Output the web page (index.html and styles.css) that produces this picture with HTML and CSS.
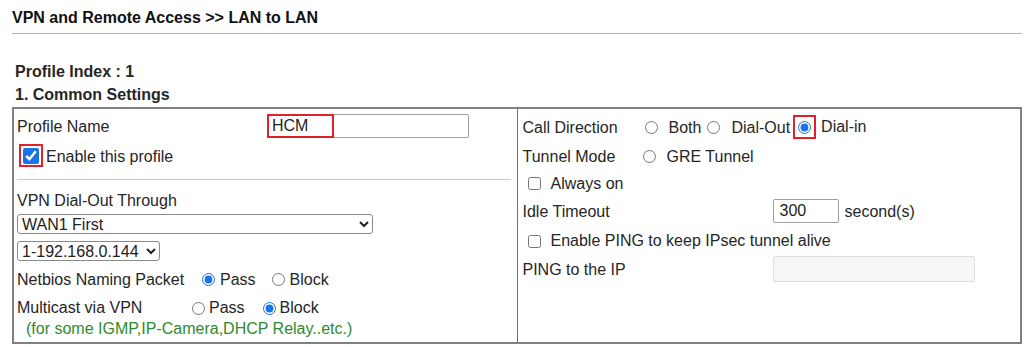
FILE: index.html
```html
<!DOCTYPE html>
<html lang="en">
<head>
    <meta charset="UTF-8">
    <title>VPN and Remote Access &gt;&gt; LAN to LAN</title>
    <link rel="stylesheet" href="styles.css">
</head>
<body>

<div class="page">
    <!-- Titulo de la pagina -->
    <h1 class="page-title">VPN and Remote Access &gt;&gt; LAN to LAN</h1>

    <div class="profile-index">Profile Index : 1</div>
    <div class="section-title">1. Common Settings</div>

    <table class="settings">
        <tr>
            <!-- Columna izquierda -->
            <td class="cell cell-left">
                <div class="row row-name">
                    <span class="label">Profile Name</span>
                    <span class="mark-wrap">
                        <input type="text" class="text-input name-input" value="HCM">
                        <span class="mark mark-name"></span>
                    </span>
                </div>
                <div class="row row-enable">
                    <span class="mark-box"><input type="checkbox" class="check-big" checked></span>
                    <span class="enable-text">Enable this profile</span>
                </div>
                <div class="divider"></div>
                <div class="row row-dial">VPN Dial-Out Through</div>
                <div class="row row-select">
                    <select class="select wan-select"><option>WAN1 First</option></select>
                </div>
                <div class="row row-select2">
                    <select class="select ip-select"><option>1-192.168.0.144</option></select>
                </div>
                <div class="row row-netbios">
                    <span class="label-netbios">Netbios Naming Packet</span>
                    <input type="radio" name="netbios" class="radio" checked><span class="opt">Pass</span>
                    <input type="radio" name="netbios" class="radio"><span class="opt">Block</span>
                </div>
                <div class="row row-multicast">
                    <span class="label-multicast">Multicast via VPN</span>
                    <input type="radio" name="multicast" class="radio"><span class="opt">Pass</span>
                    <input type="radio" name="multicast" class="radio" checked><span class="opt">Block</span>
                </div>
                <div class="row row-note">(for some IGMP,IP-Camera,DHCP Relay..etc.)</div>
            </td>

            <!-- Columna derecha -->
            <td class="cell cell-right">
                <div class="row row-call">
                    <span class="label-call">Call Direction</span>
                    <input type="radio" name="dir" class="radio"><span class="opt opt-both">Both</span>
                    <input type="radio" name="dir" class="radio"><span class="opt">Dial-Out</span>
                    <span class="mark-radio"><input type="radio" name="dir" class="radio" checked></span>
                    <span class="opt-in">Dial-in</span>
                </div>
                <div class="row row-tunnel">
                    <span class="label-tunnel">Tunnel Mode</span>
                    <input type="radio" name="tunnel" class="radio"><span class="opt">GRE Tunnel</span>
                </div>
                <div class="row row-always">
                    <input type="checkbox" class="check"><span class="check-text">Always on</span>
                </div>
                <div class="row row-idle">
                    <span class="label">Idle Timeout</span>
                    <input type="text" class="text-input idle-input" value="300">
                    <span class="unit">second(s)</span>
                </div>
                <div class="row row-ping">
                    <input type="checkbox" class="check"><span class="check-text">Enable PING to keep IPsec tunnel alive</span>
                </div>
                <div class="row row-pingip">
                    <span class="label">PING to the IP</span>
                    <input type="text" class="text-input ping-input" disabled>
                </div>
            </td>
        </tr>
    </table>
</div>

</body>
</html>
```

FILE: styles.css
```css
/* Reglas globales */
* {
    margin: 0;
    padding: 0;
    box-sizing: border-box;
}

body {
    font-family: 'Liberation Sans', Arial, sans-serif;
    font-size: 16px;
    color: #262626;
    background: #fff;
}

.page {
    padding: 9px 2px 0 12px;
}

.page-title {
    font-size: 16px;
    font-weight: bold;
    color: #111;
    height: 25px;
    line-height: 17px;
    border-bottom: 1px solid #b0b0b0;
}

.profile-index {
    font-weight: bold;
    margin-top: 29px;
    margin-left: 3px;
    line-height: 18px;
}

.section-title {
    font-weight: bold;
    margin-top: 5px;
    margin-left: 3px;
    line-height: 18px;
}

.settings {
    width: 1010px;
    margin-top: 3px;
    border-collapse: collapse;
    border: 2px solid #808080;
}

.cell {
    vertical-align: top;
    border: 1px solid #707070;
    height: 235px;
}

.cell-left {
    width: 504px;
    padding: 2px 0 0 3px;
}

.cell-right {
    padding: 2px 0 0 5px;
}

.row {
    display: flex;
    align-items: center;
    white-space: nowrap;
}

.label {
    width: 250px;
    padding-top: 2px;
}

/* Inputs */
.text-input {
    font-family: inherit;
    font-size: 16px;
    color: #222;
    height: 24px;
    padding: 0 4px;
    border: 1px solid #a0a0a0;
    border-radius: 2px;
    background: #fff;
}

.name-input {
    width: 202px;
}

.idle-input {
    width: 66px;
    padding: 0 6px;
}

.ping-input {
    width: 202px;
    height: 26px;
    background: #f6f6f6;
    border-color: #ddd;
}

.mark-wrap {
    position: relative;
    display: inline-flex;
}

.mark {
    position: absolute;
    border: 2px solid #e0202a;
}

.mark-name {
    left: 0;
    top: 0;
    width: 67px;
    height: 24px;
}

.mark-box {
    display: inline-flex;
    align-items: center;
    justify-content: center;
    width: 24px;
    height: 23px;
    margin-left: 2px;
    border: 2px solid #e0202a;
}

.check-big {
    width: 16px;
    height: 16px;
    margin: 0;
    accent-color: #1a73e8;
}

.enable-text {
    margin-left: 3px;
    padding-top: 2px;
}

.mark-radio {
    display: inline-flex;
    align-items: center;
    justify-content: center;
    width: 23px;
    height: 24px;
    margin-left: 3px;
    border: 2px solid #e0202a;
}

.opt-in {
    margin-left: 5px;
}

.radio {
    width: 13px;
    height: 13px;
    margin: 0;
    accent-color: #1a73e8;
}

.check {
    width: 13px;
    height: 13px;
    margin: 0 10px 0 5px;
}

.opt {
    margin-left: 5px;
}

/* Filas columna izquierda */
.row-name {
    height: 30px;
}

.row-enable {
    height: 29px;
}

.divider {
    width: 494px;
    height: 1px;
    background: #c8c8c8;
    margin: 9px 0 10px 0;
}

.row-dial {
    height: 21px;
    padding-top: 1px;
}

.select {
    font-family: inherit;
    font-size: 16px;
    color: #222;
    height: 20px;
    border: 1px solid #8a8a8a;
    border-radius: 3px;
    background: #fff;
}

.wan-select {
    width: 356px;
}

.ip-select {
    width: 143px;
}

.row-select {
    height: 26px;
}

.row-select2 {
    height: 27px;
}

.row-netbios {
    height: 29px;
    padding-top: 2px;
}

.label-netbios {
    width: 185px;
}

.row-netbios .opt {
    margin-right: 16px;
}

.row-multicast {
    height: 28px;
    padding-top: 2px;
}

.label-multicast {
    width: 175px;
}

.row-multicast .radio + .opt {
    margin-left: 4px;
    margin-right: 18px;
}

.row-note {
    height: 16px;
    padding-left: 9px;
    color: #2e8b2e;
}

/* Filas columna derecha */
.row-call {
    height: 32px;
}

.label-call {
    width: 122px;
    padding-top: 2px;
}

.row-call .opt {
    padding-top: 2px;
}

.row-call .radio + .opt {
    margin-left: 11px;
}

.row-call .opt-both {
    margin-right: 6px;
}

.row-tunnel {
    height: 26px;
    padding-top: 1px;
}

.label-tunnel {
    width: 120px;
}

.row-tunnel .opt {
    margin-left: 11px;
}

.row-always {
    height: 28px;
    padding-top: 1px;
}

.row-idle {
    height: 27px;
}

.unit {
    margin-left: 6px;
    padding-top: 2px;
}

.row-ping {
    height: 32px;
    padding-top: 2px;
}

.row-pingip {
    height: 26px;
}
```
